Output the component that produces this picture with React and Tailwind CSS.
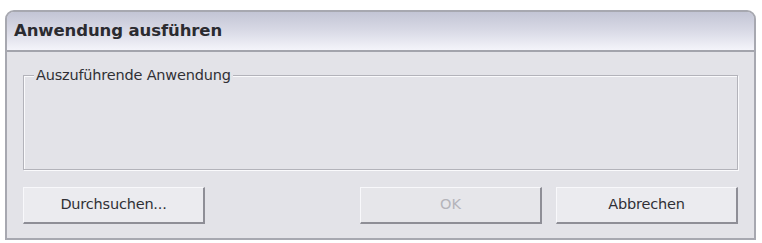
export default function App() {
  return (
    <div className="w-[762px] h-[243px] bg-white pt-[10px] pl-[5px] pr-[6px] pb-[3px] font-['DejaVu_Sans',sans-serif]">
      <div className="flex h-full flex-col overflow-hidden rounded-t-[9px] border-2 border-[#a7a8b0] bg-[#e3e3e8]">
        <div className="flex h-[40px] items-center border-b-2 border-[#a3a4ac] bg-gradient-to-b from-[#c3c5d5] via-[#d9dae6] to-[#f4f4fa] pl-[7px]">
          <span className="text-[16.5px] font-bold tracking-[-0.1px] text-[#2b2b30]">Anwendung ausführen</span>
        </div>
        <div className="flex flex-1 flex-col px-[16px] pt-[23px]">
          <div className="relative h-[95px] border border-[#b3b3ba] shadow-[inset_1px_1px_0_#fafafc,1px_1px_0_#fafafc]">
            <span className="absolute -top-[10px] left-[10px] bg-[#e3e3e8] px-[2px] text-[14.5px] leading-[18px] tracking-[-0.2px] text-[#303035]">
              Auszuführende Anwendung
            </span>
          </div>
          <div className="mt-[17px] flex items-start">
            <button className="h-[37px] w-[182px] border border-[#f8f8fb] border-r-2 border-b-2 border-r-[#8e8e96] border-b-[#8e8e96] bg-[#ebebef] text-[14.5px] tracking-[-0.2px] text-[#303035]">
              Durchsuchen...
            </button>
            <button className="ml-auto h-[37px] w-[182px] border border-[#f8f8fb] border-r-2 border-b-2 border-r-[#8e8e96] border-b-[#8e8e96] bg-[#e6e6ea] text-[14.5px] text-[#b4b4ba]">
              OK
            </button>
            <button className="ml-[14px] h-[37px] w-[182px] border border-[#f8f8fb] border-r-2 border-b-2 border-r-[#8e8e96] border-b-[#8e8e96] bg-[#ebebef] text-[14.5px] tracking-[-0.2px] text-[#303035]">
              Abbrechen
            </button>
          </div>
        </div>
      </div>
    </div>
  )
}
